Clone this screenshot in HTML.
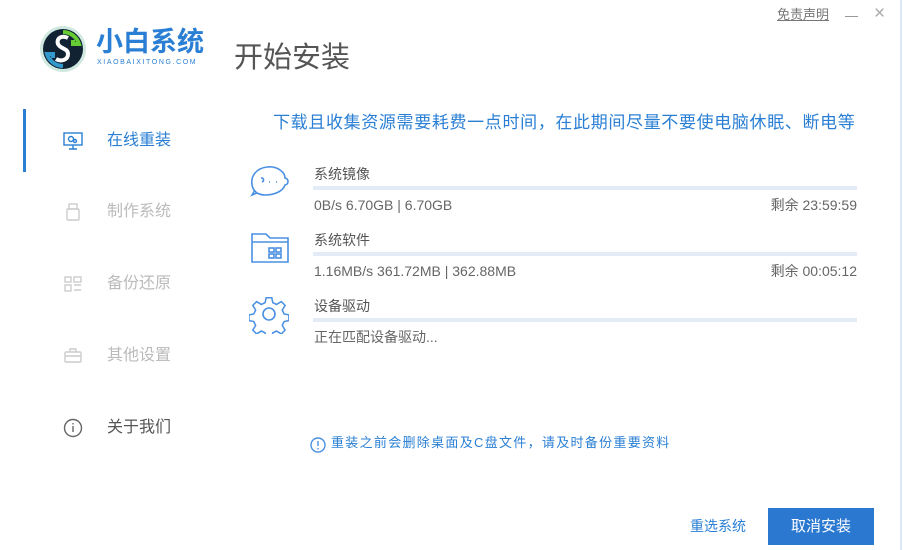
<!DOCTYPE html><html><head><meta charset="utf-8"><style>
*{margin:0;padding:0;box-sizing:border-box}
body{width:903px;height:550px;background:#fff;position:relative;overflow:hidden;font-family:"Liberation Sans","Noto Sans CJK SC",sans-serif}
.a{position:absolute;white-space:nowrap;line-height:1.25}
.nav{font-size:16px;color:#bbb;left:107px}
.t{font-size:14px;color:#555;left:314px;line-height:20px}
.d{font-size:14px;color:#666;left:314px;line-height:20px}
.r{font-size:14px;color:#666;right:46px;line-height:20px}
.bar{position:absolute;left:313px;width:544px;height:4px;background:#e2ebf6}
</style></head><body>
<svg class="a" style="left:38px;top:24px" width="52" height="50" viewBox="0 0 52 50">
<circle cx="25" cy="25" r="23" fill="#cfe8e0"/><circle cx="25" cy="25" r="20" fill="#123"/>
<path d="M25 8a17 17 0 0 1 16 12l-6 0 0-4" fill="none" stroke="#6c3" stroke-width="4"/>
<path d="M25 42a17 17 0 0 1-16-12l6 0 0 4" fill="none" stroke="#39c" stroke-width="4"/>
<path d="M30 14c-6-3-12 0-10 6 2 5 10 4 10 10 0 6-7 8-12 5" fill="none" stroke="#fff" stroke-width="4"/>
</svg>
<div class="a" style="left:96px;top:26px;font-size:27px;color:#2a7fd4;font-weight:bold;letter-spacing:0px">小白系统</div>
<div class="a" style="left:97px;top:59px;font-size:7px;color:#2a7fd4;letter-spacing:1.6px">XIAOBAIXITONG.COM</div>
<div class="a" style="left:234px;top:40px;font-size:29px;color:#555">开始安装</div>
<div class="a" style="left:777px;top:7px;font-size:13px;color:#777;text-decoration:underline">免责声明</div>
<div class="a" style="left:845px;top:16px;width:13px;height:1px;background:#999"></div>
<div class="a" style="left:874px;top:2px;font-size:19px;color:#aaa">×</div>
<div class="a" style="left:900px;top:0;width:2px;height:550px;background:#dbe8f6"></div>
<div class="a" style="left:23px;top:109px;width:3px;height:63px;background:#2a7fd4"></div>
<svg class="a" style="left:63px;top:132px" width="20" height="18" viewBox="0 0 20 18" fill="none" stroke="#2a7fd4" stroke-width="1.4"><rect x="1" y="1" width="18" height="12"/><path d="M6 17h8M10 13v4"/><circle cx="8" cy="7" r="2.5"/><circle cx="12" cy="9" r="1.5"/></svg>
<div class="a nav" style="top:131px;color:#2a7fd4">在线重装</div>
<svg class="a" style="left:66px;top:203px" width="14" height="18" viewBox="0 0 14 18" fill="none" stroke="#ccc" stroke-width="1.4"><rect x="1" y="6" width="12" height="11" rx="1"/><rect x="3" y="1" width="8" height="5"/></svg>
<div class="a nav" style="top:202px">制作系统</div>
<svg class="a" style="left:64px;top:276px" width="18" height="16" viewBox="0 0 18 16" fill="none" stroke="#ccc" stroke-width="1.4"><rect x="1" y="1" width="6" height="5"/><rect x="10" y="1" width="7" height="5"/><rect x="1" y="9" width="6" height="6"/><path d="M10 9h7M10 14h7"/></svg>
<div class="a nav" style="top:274px">备份还原</div>
<svg class="a" style="left:64px;top:348px" width="18" height="15" viewBox="0 0 18 15" fill="none" stroke="#ccc" stroke-width="1.4"><rect x="1" y="4" width="16" height="10" rx="1"/><path d="M6 4V1h6v3M1 8h16"/></svg>
<div class="a nav" style="top:346px">其他设置</div>
<svg class="a" style="left:63px;top:418px" width="20" height="20" viewBox="0 0 20 20" fill="none" stroke="#666" stroke-width="1.4"><circle cx="10" cy="10" r="8.5"/><path d="M10 8v6M10 5v1.5"/></svg>
<div class="a nav" style="top:418px;color:#555">关于我们</div>
<div class="a" style="left:273px;top:112px;font-size:17px;color:#2a7fd4;letter-spacing:0.65px">下载且收集资源需要耗费一点时间，在此期间尽量不要使电脑休眠、断电等</div>
<svg class="a" style="left:249px;top:163px" width="42" height="36" viewBox="0 0 42 36" fill="none" stroke="#4a90e2" stroke-width="1.6"><path d="M8 30C2 26 1 16 6 10 12 3 24 2 31 7c3 2 5 5 5 8 4 1 4 6 0 7-2 6-10 10-20 10-3 0-6-1-8-2z"/><path d="M8 30l-5 2 3-5"/><path d="M12 15a2 2 0 0 1 1 4M20 19h1M27 19h1"/></svg>
<div class="a t" style="top:164px">系统镜像</div><div class="bar" style="top:186px"></div>
<div class="a d" style="top:195px">0B/s 6.70GB | 6.70GB</div><div class="a r" style="top:195px">剩余 23:59:59</div>
<svg class="a" style="left:249px;top:230px" width="42" height="36" viewBox="0 0 42 36" fill="none" stroke="#4a90e2" stroke-width="1.6"><path d="M3 4h14l4 4h18v24H3z"/><path d="M3 12h36"/><rect x="20" y="18" width="5" height="4"/><rect x="27" y="18" width="5" height="4"/><rect x="20" y="24" width="5" height="4"/><rect x="27" y="24" width="5" height="4"/></svg>
<div class="a t" style="top:230px">系统软件</div><div class="bar" style="top:252px"></div>
<div class="a d" style="top:261px">1.16MB/s 361.72MB | 362.88MB</div><div class="a r" style="top:261px">剩余 00:05:12</div>
<svg class="a" style="left:249px;top:294px" width="40" height="40" viewBox="0 0 40 40" fill="none" stroke="#4a90e2" stroke-width="1.6"><path d="M17 3h6l1 5 4 2 5-3 4 4-3 5 2 4 5 1v6l-5 1-2 4 3 5-4 4-5-3-4 2-1 5h-6l-1-5-4-2-5 3-4-4 3-5-2-4-5-1v-6l5-1 2-4-3-5 4-4 5 3 4-2z" transform="scale(.95) translate(1 1)"/><circle cx="20" cy="20" r="6"/></svg>
<div class="a t" style="top:296px">设备驱动</div><div class="bar" style="top:318px"></div>
<div class="a d" style="top:327px">正在匹配设备驱动...</div>
<svg class="a" style="left:310px;top:437px" width="16" height="16" viewBox="0 0 16 16" fill="none" stroke="#4a90e2" stroke-width="1.4"><circle cx="8" cy="8" r="7"/><path d="M8 4v5M8 11v1.5"/></svg>
<div class="a" style="left:331px;top:435px;font-size:13px;color:#2a7fd4;letter-spacing:1.3px">重装之前会删除桌面及C盘文件，请及时备份重要资料</div>
<div class="a" style="left:690px;top:518px;font-size:14px;color:#2a7fd4">重选系统</div>
<div class="a" style="left:768px;top:508px;width:106px;height:37px;background:#2b78d0;color:#fff;font-size:15px;text-align:center;line-height:38px">取消安装</div>
</body></html>
